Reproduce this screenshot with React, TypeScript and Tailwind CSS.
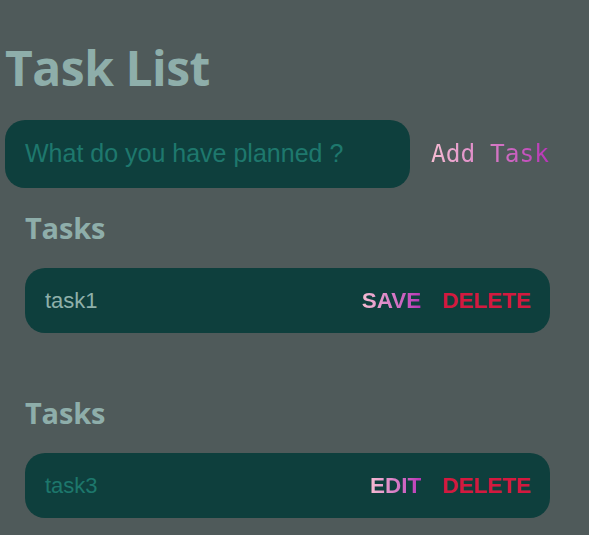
import React from "react";

const grad = "bg-gradient-to-r from-[#f6bcd2] to-[#b732b6] bg-clip-text text-transparent";

function Row({ name, nameColor, action }: { name: string; nameColor: string; action: string }) {
  return (
    <div className="flex h-[65px] w-[525px] items-center rounded-[20px] bg-[#0e3f3d] pl-[20px] pr-[19px] font-['Liberation_Sans',Arial,sans-serif] text-[22px]">
      <span className={nameColor}>{name}</span>
      <div className="ml-auto flex items-center gap-[21px] text-[22.5px] font-bold">
        <span className={grad}>{action}</span>
        <span className="text-[#d3193f]">DELETE</span>
      </div>
    </div>
  );
}

function Section({ children }: { children: React.ReactNode }) {
  return (
    <div className="pl-[20px]">
      <h2 className="h-[36px] font-['Open_Sans',sans-serif] text-[29px] font-bold leading-[36px] tracking-[-0.2px] text-[#8eaeaa]">Tasks</h2>
      <div className="mt-[22px]">{children}</div>
    </div>
  );
}

export default function App() {
  return (
    <div className="min-h-[535px] w-[589px] bg-[#4f5a5a] pl-[5px] pt-[40px]">
      <h1 className="h-[56px] font-['Open_Sans',sans-serif] text-[48px] font-bold leading-[56px] tracking-[-0.5px] text-[#8eaeaa]">
        Task List
      </h1>
      <div className="mt-[24px] flex items-center">
        <div className="flex h-[68px] w-[405px] items-center rounded-[20px] bg-[#0e3f3d] pl-[20px] font-['Liberation_Sans',Arial,sans-serif] text-[25px] text-[#1e786d]">
          What do you have planned ?
        </div>
        <span className={`ml-[21px] font-['DejaVu_Sans_Mono',monospace] text-[24.5px] ${grad}`}>Add Task</span>
      </div>
      <div className="mt-[22px]">
        <Section>
          <Row name="task1" nameColor="text-[#8fb0aa]" action="SAVE" />
        </Section>
      </div>
      <div className="mt-[62px]">
        <Section>
          <Row name="task3" nameColor="text-[#1d776c]" action="EDIT" />
        </Section>
      </div>
    </div>
  );
}
